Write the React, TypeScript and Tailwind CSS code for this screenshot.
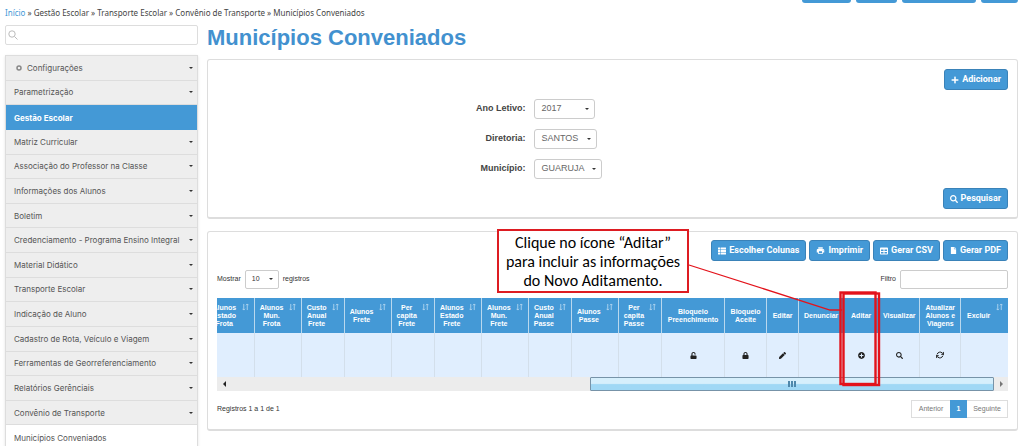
import type { ReactNode } from "react";
import { FaFile, FaLock, FaPen, FaPlus, FaPlusCircle, FaSearch, FaTable, FaThList, FaUnlock } from "react-icons/fa";
import { FiRefreshCw } from "react-icons/fi";
import { MdPrint } from "react-icons/md";

const menu = [
  "Parametrização",
  "Gestão Escolar",
  "Matriz Curricular",
  "Associação do Professor na Classe",
  "Informações dos Alunos",
  "Boletim",
  "Credenciamento - Programa Ensino Integral",
  "Material Didático",
  "Transporte Escolar",
  "Indicação de Aluno",
  "Cadastro de Rota, Veículo e Viagem",
  "Ferramentas de Georreferenciamento",
  "Relatórios Gerênciais",
  "Convênio de Transporte",
];

type Column = { lines: string[]; width: string; sort?: boolean; icon?: ReactNode };

const columns: Column[] = [
  { lines: ["Alunos", "Estado", "Frota"], width: "w-[47px]", sort: true },
  { lines: ["Alunos", "Mun.", "Frota"], width: "w-[47px]", sort: true },
  { lines: ["Custo", "Anual", "Frete"], width: "w-[43px]", sort: true },
  { lines: ["Alunos", "Frete"], width: "w-[47px]", sort: true },
  { lines: ["Per", "capita", "Frete"], width: "w-[43px]", sort: true },
  { lines: ["Alunos", "Estado", "Frete"], width: "w-[47px]", sort: true },
  { lines: ["Alunos", "Mun.", "Frete"], width: "w-[47px]", sort: true },
  { lines: ["Custo", "Anual", "Passe"], width: "w-[43px]", sort: true },
  { lines: ["Alunos", "Passe"], width: "w-[47px]", sort: true },
  { lines: ["Per", "capita", "Passe"], width: "w-[43px]", sort: true },
  { lines: ["Bloqueio", "Preenchimento"], width: "w-[63px]", icon: <FaUnlock size={7} /> },
  { lines: ["Bloqueio", "Aceite"], width: "w-[42px]", icon: <FaLock size={7} /> },
  { lines: ["Editar"], width: "w-[32px]", icon: <FaPen size={7} /> },
  { lines: ["Denunciar"], width: "w-[45px]" },
  { lines: ["Aditar"], width: "w-[35px]", icon: <FaPlusCircle size={7} /> },
  { lines: ["Visualizar"], width: "w-[41px]", icon: <FaSearch size={7} /> },
  { lines: ["Atualizar", "Alunos e", "Viagens"], width: "w-[41px]", icon: <FiRefreshCw size={8} strokeWidth={3} /> },
  { lines: ["Excluir"], width: "w-[47px]", sort: true },
];

function Caret({ className = "" }: { className?: string }) {
  return (
    <svg viewBox="0 0 4 2" className={`h-[2px] w-1 shrink-0 fill-[#333] ${className}`} aria-hidden="true">
      <path d="M0 0h4L2 2z" />
    </svg>
  );
}

function SortIcon() {
  return (
    <svg viewBox="0 0 8 9" className="absolute top-[5px] right-[5px] h-2 w-[7px]" fill="none" stroke="#b4d7f0" strokeWidth="1" aria-hidden="true">
      <path d="M2 1v7M.5 6.500 2 8l1.500-1.500M6 8V1M4.500 2.500 6 1l1.500 1.500" />
    </svg>
  );
}

function ActionButton({ icon, children }: { icon: ReactNode; children: ReactNode }) {
  return (
    <button
      type="button"
      className="flex h-[21px] items-center gap-[3px] rounded-[3px] border border-[#3a82b8] bg-[#4499d6] px-[6px] font-[Roboto,Arial,sans-serif] text-[9px] font-bold whitespace-nowrap text-white"
    >
      {icon}
      {children}
    </button>
  );
}

function FormSelect({ id, label, value, width }: { id: string; label: string; value: string; width: string }) {
  return (
    <>
      <label htmlFor={id} className="text-right text-[9px] font-bold text-[#444]">
        {label}
      </label>
      <div className={`relative h-5 ${width}`}>
        <select id={id} className="block h-full w-full appearance-none rounded-[3px] border border-[#ccc] bg-white px-[6px] text-[9px] text-[#666]">
          <option>{value}</option>
        </select>
        <Caret className="pointer-events-none absolute top-[9px] right-[6px]" />
      </div>
    </>
  );
}

function Sidebar() {
  return (
    <aside className="w-[193px] shrink-0">
      <div className="flex h-5 items-center rounded-[2px] border border-[#ddd] bg-white pl-[2px]">
        <svg viewBox="0 0 10 10" className="h-[10px] w-[10px]" fill="none" stroke="#bbb" aria-hidden="true">
          <circle cx="4" cy="4" r="3.200" />
          <path d="m6.500 6.500 3 3" />
        </svg>
        <input type="search" aria-label="Buscar" className="min-w-0 flex-1 px-1 text-[9px] outline-none" />
      </div>
      <nav className="mt-[10px] grid min-h-[396px] auto-rows-fr border border-[#ddd] bg-[#eee] font-[Inter,Arial,sans-serif] text-[8px] text-[#555] shadow-sm">
        <a href="#" className="flex items-center border-b border-[#ddd] pr-1 pl-[10px]">
          <svg viewBox="0 0 6 6" className="mr-[5px] h-[6px] w-[6px]" fill="none" stroke="#888" aria-hidden="true">
            <circle cx="3" cy="3" r="2" strokeWidth="1.500" />
          </svg>
          <span className="flex-1">Configurações</span>
          <Caret />
        </a>
        {menu.map((item) =>
          item === "Gestão Escolar" ? (
            <a key={item} href="#" className="flex items-center bg-[#4499d6] px-2 font-bold text-white">
              {item}
            </a>
          ) : (
            <a key={item} href="#" className="flex items-center border-b border-[#ddd] pr-1 pl-2 whitespace-nowrap">
              <span className="flex-1">{item}</span>
              <Caret />
            </a>
          ),
        )}
        <a href="#" className="flex items-center bg-white px-2">
          Municípios Conveniados
        </a>
      </nav>
    </aside>
  );
}

function SearchPanel() {
  return (
    <section className="rounded-[3px] border border-b-2 border-[#ddd] px-[9px] pt-[9px] pb-2">
      <div className="flex justify-end">
        <ActionButton icon={<FaPlus size={8} />}>Adicionar</ActionButton>
      </div>
      <form className="my-[9px] grid grid-cols-[39%_1fr] items-center gap-x-[9px] gap-y-[10px]">
        <FormSelect id="ano" label="Ano Letivo:" value="2017" width="w-[61px]" />
        <FormSelect id="diretoria" label="Diretoria:" value="SANTOS" width="w-[63px]" />
        <FormSelect id="municipio" label="Município:" value="GUARUJA" width="w-[68px]" />
      </form>
      <div className="flex justify-end">
        <ActionButton icon={<FaSearch size={8} />}>Pesquisar</ActionButton>
      </div>
    </section>
  );
}

function RecordsTable() {
  return (
    <div className="mt-[9px] overflow-hidden">
      {/* shifted left: the grid is scrolled to its right end */}
      <table className="-ml-[10px] w-[calc(100%+10px)] table-fixed border-collapse">
        <thead>
          <tr className="h-[35px] bg-[#4499d6] text-[7px] leading-[8px] font-bold text-white">
            {columns.map((c) => (
              <th key={c.lines.join(" ")} className={`relative border-r border-[#b9d8ee] p-0 last:border-r-0 ${c.width} ${c.sort ? "pr-3" : ""}`}>
                {c.lines.map((line) => (
                  <span key={line} className="block whitespace-nowrap">
                    {line}
                  </span>
                ))}
                {c.sort && <SortIcon />}
              </th>
            ))}
          </tr>
        </thead>
        <tbody>
          <tr className="h-[44px] bg-[#e0eefe] text-[#222]">
            {columns.map((c) => (
              <td key={c.lines.join(" ")} className="border-r border-[#d3dfeb] p-0 last:border-r-0">
                {c.icon && (
                  <button type="button" aria-label={c.lines.join(" ")} className="mx-auto block">
                    {c.icon}
                  </button>
                )}
              </td>
            ))}
          </tr>
        </tbody>
      </table>
      <div className="flex h-[14px] items-stretch bg-[#ececec]">
        <button type="button" aria-label="Rolar para a esquerda" className="flex w-[14px] items-center justify-center">
          <svg viewBox="0 0 3 6" className="h-[6px] w-[3px] fill-[#222]">
            <path d="M3 0v6L0 3z" />
          </svg>
        </button>
        <div className="flex flex-1 justify-end">
          <div className="flex w-[53%] items-center justify-center gap-[1px] rounded-[1px] border border-[#7793a8] bg-linear-to-b from-[#d6effc] from-45% to-[#a0d8f5] to-55%">
            <span className="h-[6px] w-[2px] bg-[#4f88ab]" />
            <span className="h-[6px] w-[2px] bg-[#4f88ab]" />
            <span className="h-[6px] w-[2px] bg-[#4f88ab]" />
          </div>
        </div>
        <button type="button" aria-label="Rolar para a direita" className="flex w-[14px] items-center justify-center">
          <svg viewBox="0 0 3 6" className="h-[6px] w-[3px] fill-[#777]">
            <path d="M0 0v6l3-3z" />
          </svg>
        </button>
      </div>
    </div>
  );
}

function Callout() {
  return (
    <div className="pointer-events-none absolute -top-[3px] right-[136px] h-[158px] w-[384px]">
      <svg viewBox="0 0 384 158" className="absolute inset-0 h-full w-full" fill="none" stroke="#e3131b" aria-hidden="true">
        <path d="M192 36 333 81h12" strokeWidth="1.300" />
        <rect x="343.500" y="63.500" width="35" height="91.500" strokeWidth="2.400" />
        <rect x="346.500" y="64.500" width="35.500" height="91.500" strokeWidth="2.400" />
      </svg>
      <p className="absolute top-0 left-0 flex h-16 w-48 items-center justify-center border-2 border-[#dd1c22] bg-white text-center font-['Carlito','Lato',sans-serif] text-[16px] leading-[19px] whitespace-nowrap text-black">
        Clique no ícone “Aditar”
        <br />
        para incluir as informações
        <br />
        do Novo Aditamento.
      </p>
    </div>
  );
}

function ResultsPanel() {
  return (
    <section className="relative mt-3 rounded-[3px] border border-b-2 border-[#ddd] px-[9px] pt-2 pb-[11px] text-[7px] text-[#333]">
      <div className="flex justify-end gap-[3px]">
        <ActionButton icon={<FaThList size={8} />}>Escolher Colunas</ActionButton>
        <ActionButton icon={<MdPrint size={9} />}>Imprimir</ActionButton>
        <ActionButton icon={<FaTable size={8} />}>Gerar CSV</ActionButton>
        <ActionButton icon={<FaFile size={7} />}>Gerar PDF</ActionButton>
      </div>
      <div className="mt-[9px] flex h-[19px] items-center justify-between">
        <div className="flex items-center gap-1">
          <label htmlFor="mostrar">Mostrar</label>
          <div className="relative h-[19px] w-[34px]">
            <select id="mostrar" className="block h-full w-full appearance-none rounded-[2px] border border-[#ccc] bg-white px-[6px] text-[7px]">
              <option>10</option>
            </select>
            <Caret className="pointer-events-none absolute top-2 right-[6px]" />
          </div>
          <label htmlFor="mostrar">registros</label>
        </div>
        <div className="flex items-center gap-1">
          <label htmlFor="filtro">Filtro</label>
          <input id="filtro" type="text" className="h-[19px] w-[108px] rounded-[2px] border border-[#ccc] px-1" />
        </div>
      </div>
      <RecordsTable />
      <div className="mt-[9px] flex items-center justify-between">
        <span>Registros 1 a 1 de 1</span>
        <div className="flex h-[18px] text-[7px] text-[#777]">
          <button type="button" className="w-[39px] border border-r-0 border-[#ddd]">Anterior</button>
          <button type="button" className="w-[17px] bg-[#4499d6] font-bold text-white">1</button>
          <button type="button" className="w-[41px] border border-l-0 border-[#ddd]">Seguinte</button>
        </div>
      </div>
      <Callout />
    </section>
  );
}

export default function App() {
  return (
    <div className="bg-white pr-[6px] pl-[5px] font-['Liberation_Sans',Arial,sans-serif]">
      <header className="flex h-[25px] items-start justify-between">
        <p className="pt-[7px] font-['Noto_Sans',Verdana,sans-serif] text-[8px] leading-[12px] text-[#444]">
          <a href="#" className="text-[#4499d6]">Início</a> » Gestão Escolar » Transporte Escolar » Convênio de Transporte » Municípios Conveniados
        </p>
        <div className="flex gap-[5px]">
          <button type="button" aria-label="Início" className="h-[3px] w-[49px] rounded-b-[3px] bg-[#4499d6]" />
          <button type="button" aria-label="Perfil" className="h-[3px] w-[41px] rounded-b-[3px] bg-[#4499d6]" />
          <button type="button" aria-label="Alterar senha" className="h-[3px] w-[74px] rounded-b-[3px] bg-[#4499d6]" />
          <button type="button" aria-label="Sair" className="h-[3px] w-[37px] rounded-b-[3px] bg-[#4499d6]" />
        </div>
      </header>
      <div className="flex gap-[9px]">
        <Sidebar />
        <main className="min-w-0 flex-1">
          <h1 className="mb-[8px] text-[22px] leading-[26px] font-bold text-[#4291cf]">Municípios Conveniados</h1>
          <SearchPanel />
          <ResultsPanel />
        </main>
      </div>
    </div>
  );
}
